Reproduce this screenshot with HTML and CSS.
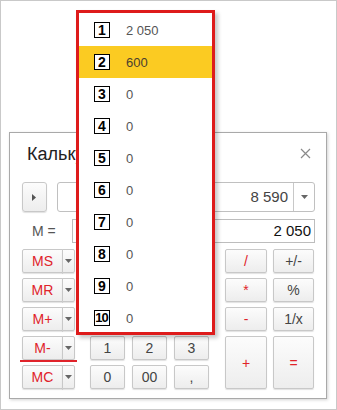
FILE: index.html
```html
<!DOCTYPE html>
<html lang="ru">
<head>
<meta charset="utf-8">
<title>Калькулятор</title>
<link rel="stylesheet" href="styles.css">
</head>
<body>
<div class="page">
  <div class="window">
    <div class="title-row">
      <div class="title">Калькулятор</div>
      <svg class="close" width="11" height="11" viewBox="0 0 11 11"><path d="M1 1L10 10M10 1L1 10" stroke="#8a8a8a" stroke-width="1.2" fill="none"/></svg>
    </div>
    <div class="row1">
      <div class="btn play"><svg width="5" height="7" viewBox="0 0 5 7"><path d="M0 0L4 3.5L0 7Z" fill="#555"/></svg></div>
      <div class="combo">
        <div class="combo-val">8 590</div>
        <div class="combo-arrow"><svg width="7" height="4" viewBox="0 0 7 4"><path d="M0 0L7 0L3.5 4Z" fill="#666"/></svg></div>
      </div>
    </div>
    <div class="row2">
      <div class="mlabel">M =</div>
      <div class="mfield">2 050</div>
    </div>
    <div class="keys">
      <div class="mem r1"><div class="btn mb red">MS</div><div class="btn ma"><svg width="7" height="4" viewBox="0 0 7 4"><path d="M0 0L7 0L3.5 4Z" fill="#666"/></svg></div></div>
      <div class="mem r2"><div class="btn mb red">MR</div><div class="btn ma"><svg width="7" height="4" viewBox="0 0 7 4"><path d="M0 0L7 0L3.5 4Z" fill="#666"/></svg></div></div>
      <div class="mem r3"><div class="btn mb red">M+</div><div class="btn ma"><svg width="7" height="4" viewBox="0 0 7 4"><path d="M0 0L7 0L3.5 4Z" fill="#666"/></svg></div></div>
      <div class="mem r4 active"><div class="btn mb red">M-</div><div class="btn ma"><svg width="7" height="4" viewBox="0 0 7 4"><path d="M0 0L7 0L3.5 4Z" fill="#666"/></svg></div></div>
      <div class="mem r5"><div class="btn mb red">MC</div><div class="btn ma"><svg width="7" height="4" viewBox="0 0 7 4"><path d="M0 0L7 0L3.5 4Z" fill="#666"/></svg></div></div>

      <div class="btn d1 r1">7</div><div class="btn d2 r1">8</div><div class="btn d3 r1">9</div>
      <div class="btn d1 r2">4</div><div class="btn d2 r2">5</div><div class="btn d3 r2">6</div>
      <div class="btn d1 r3">C</div><div class="btn d2 r3">CE</div><div class="btn d3 r3">←</div>
      <div class="btn d1 r4">1</div><div class="btn d2 r4">2</div><div class="btn d3 r4">3</div>
      <div class="btn d1 r5">0</div><div class="btn d2 r5">00</div><div class="btn d3 r5">,</div>

      <div class="btn o1 r1 red">/</div><div class="btn o2 r1">+/-</div>
      <div class="btn o1 r2 red">*</div><div class="btn o2 r2">%</div>
      <div class="btn o1 r3 red">-</div><div class="btn o2 r3">1/x</div>
      <div class="btn o1 tall red">+</div><div class="btn o2 tall red">=</div>
    </div>
  </div>

  <div class="dropdown">
    <div class="item"><span class="num">1</span><span class="val">2 050</span></div>
    <div class="item selected"><span class="num">2</span><span class="val">600</span></div>
    <div class="item"><span class="num">3</span><span class="val">0</span></div>
    <div class="item"><span class="num">4</span><span class="val">0</span></div>
    <div class="item"><span class="num">5</span><span class="val">0</span></div>
    <div class="item"><span class="num">6</span><span class="val">0</span></div>
    <div class="item"><span class="num">7</span><span class="val">0</span></div>
    <div class="item"><span class="num">8</span><span class="val">0</span></div>
    <div class="item"><span class="num">9</span><span class="val">0</span></div>
    <div class="item"><span class="num ten">10</span><span class="val">0</span></div>
  </div>
</div>
</body>
</html>
```

FILE: styles.css
```css
html, body {
  margin: 0;
  padding: 0;
  background: #fff;
}
body {
  font-family: "Liberation Sans", Arial, sans-serif;
  color: #444;
}
.page {
  position: relative;
  width: 337px;
  height: 410px;
  box-sizing: border-box;
  border: 1px solid #c9c9c9;
  padding: 131px 0 0 8px;
  overflow: hidden;
}
.window {
  width: 318px;
  height: 267px;
  box-sizing: border-box;
  border: 1px solid #a9a9a9;
  background: #fff;
  box-shadow: 1px 1px 3px rgba(0,0,0,0.18);
  padding: 10px 11px 0 12px;
}
.title-row {
  display: flex;
  align-items: center;
  justify-content: space-between;
  height: 22px;
  padding-left: 5px;
}
.title {
  font-size: 18px;
  line-height: 22px;
  color: #222;
}
.close {
  margin-right: 4px;
  margin-top: -1px;
}
.btn {
  box-sizing: border-box;
  border: 1px solid #c8c8c8;
  border-radius: 2px;
  background: linear-gradient(#fcfcfc, #ededed);
  box-shadow: 0 1px 1px rgba(0,0,0,0.12);
  display: flex;
  align-items: center;
  justify-content: center;
  font-size: 14px;
  color: #444;
}
.red { color: #e0232a; }
.row1 {
  display: flex;
  margin-top: 17px;
  height: 30px;
}
.play {
  width: 25px;
  height: 30px;
  border-radius: 3px;
}
.combo {
  margin-left: 10px;
  flex: 1;
  display: flex;
  border: 1px solid #c0c0c0;
  border-radius: 3px;
  box-sizing: border-box;
}
.combo-val {
  flex: 1;
  text-align: right;
  padding-right: 5px;
  font-size: 15px;
  line-height: 28px;
  color: #444;
}
.combo-arrow {
  width: 20px;
  border-left: 1px solid #c8c8c8;
  display: flex;
  align-items: center;
  justify-content: center;
}
.row2 {
  display: flex;
  align-items: center;
  margin-top: 7px;
  height: 24px;
}
.mlabel {
  width: 50px;
  padding-left: 10px;
  box-sizing: border-box;
  font-size: 14px;
  color: #555;
}
.mfield {
  flex: 1;
  height: 24px;
  box-sizing: border-box;
  border: 1px solid #bdbdbd;
  text-align: right;
  padding-right: 3px;
  font-size: 15px;
  line-height: 22px;
  color: #111;
}
.keys {
  margin-top: 6px;
  display: grid;
  grid-template-columns: 53px 15px 35px 7px 35px 7px 35px 16px 42px 6px 41px;
  grid-template-rows: 24px 24px 24px 24px 24px;
  row-gap: 5px;
}
.mem {
  grid-column: 1;
  display: flex;
  position: relative;
}
.mem .mb {
  width: 41px;
  border-radius: 2px 0 0 2px;
}
.mem .ma {
  width: 13px;
  margin-left: -1px;
  border-radius: 0 2px 2px 0;
}
.mem.active::after {
  content: "";
  position: absolute;
  left: -2px;
  right: -2px;
  bottom: -2px;
  height: 2px;
  background: #e0232a;
}
.r1 { grid-row: 1; }
.r2 { grid-row: 2; }
.r3 { grid-row: 3; }
.r4 { grid-row: 4; }
.r5 { grid-row: 5; }
.d1 { grid-column: 3; }
.d2 { grid-column: 5; }
.d3 { grid-column: 7; }
.o1 { grid-column: 9; }
.o2 { grid-column: 11; }
.tall { grid-row: 4 / span 2; }

.dropdown {
  position: absolute;
  left: 75px;
  top: 9px;
  width: 139px;
  height: 325px;
  box-sizing: border-box;
  border: 3px solid #de1b1b;
  background: #fff;
  box-shadow: 3px 3px 4px rgba(0,0,0,0.22);
  padding-top: 1px;
  overflow: hidden;
}
.item {
  height: 32px;
  display: flex;
  align-items: center;
  padding-left: 15px;
}
.item.selected {
  background: #fbcb22;
}
.num {
  box-sizing: border-box;
  width: 16px;
  height: 16px;
  border: 1px solid #000;
  background: #fff;
  font-size: 14px;
  font-weight: bold;
  color: #000;
  display: flex;
  align-items: center;
  justify-content: center;
  line-height: 14px;
}
.num.ten {
  font-size: 13px;
  letter-spacing: -1px;
  padding-right: 1px;
}
.val {
  margin-left: 16px;
  font-size: 13px;
  color: #555;
}
.selected .val {
  color: #4a4030;
}
```
